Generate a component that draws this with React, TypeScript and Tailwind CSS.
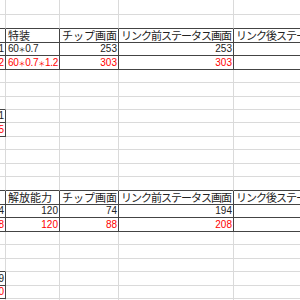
import React from 'react';

type Cell = {
  t?: string;
  right?: boolean;
  red?: boolean;
  jp?: boolean;
  tight?: boolean;
  b?: boolean; // dark bottom border
  r?: boolean; // dark right border
};

type Row = { h: number; cells: Cell[] };

const heights: Record<number, string> = {
  13: 'h-[13px]',
  14: 'h-[14px]',
  15: 'h-[15px]',
  20: 'h-[20px]',
};

const widths = ['w-[6px]', 'w-[54px]', 'w-[59px]', 'w-[115px]', 'w-[80px]'];

const empty = (): Cell[] => [{}, {}, {}, {}, {}];
const darkBottomA = (): Cell[] => [{ b: true }, {}, {}, {}, {}];
const darkBottomAll = (): Cell[] => [{ b: true }, { b: true }, { b: true }, { b: true }, { b: true }];

const box = (c: Cell): Cell => ({ ...c, b: true, r: true });

const rows: Row[] = [
  { h: 15, cells: empty() },
  { h: 14, cells: darkBottomAll() },
  {
    h: 14,
    cells: [
      box({}),
      box({ t: '特装', jp: true }),
      box({ t: 'チップ画面', jp: true }),
      box({ t: 'リンク前ステータス画面', jp: true, tight: true }),
      box({ t: 'リンク後ステータス画面', jp: true, tight: true }),
    ],
  },
  {
    h: 13,
    cells: [
      box({ t: '1', right: true }),
      box({ t: '60＊0.7' }),
      box({ t: '253', right: true }),
      box({ t: '253', right: true }),
      box({}),
    ],
  },
  {
    h: 14,
    cells: [
      box({ t: '2', right: true, red: true }),
      box({ t: '60＊0.7＊1.2', red: true }),
      box({ t: '303', right: true, red: true }),
      box({ t: '303', right: true, red: true }),
      box({}),
    ],
  },
  { h: 13, cells: empty() },
  { h: 14, cells: empty() },
  { h: 13, cells: darkBottomA() },
  { h: 13, cells: [box({ t: '1', right: true }), {}, {}, {}, {}] },
  { h: 14, cells: [box({ t: '5', right: true, red: true }), {}, {}, {}, {}] },
  { h: 13, cells: empty() },
  { h: 14, cells: empty() },
  { h: 13, cells: empty() },
  { h: 14, cells: darkBottomAll() },
  {
    h: 14,
    cells: [
      box({}),
      box({ t: '解放能力', jp: true }),
      box({ t: 'チップ画面', jp: true }),
      box({ t: 'リンク前ステータス画面', jp: true, tight: true }),
      box({ t: 'リンク後ステータス画面', jp: true, tight: true }),
    ],
  },
  {
    h: 13,
    cells: [
      box({ t: '4', right: true }),
      box({ t: '120', right: true }),
      box({ t: '74', right: true }),
      box({ t: '194', right: true }),
      box({}),
    ],
  },
  {
    h: 14,
    cells: [
      box({ t: '8', right: true, red: true }),
      box({ t: '120', right: true, red: true }),
      box({ t: '88', right: true, red: true }),
      box({ t: '208', right: true, red: true }),
      box({}),
    ],
  },
  { h: 13, cells: empty() },
  { h: 14, cells: empty() },
  { h: 13, cells: darkBottomA() },
  { h: 14, cells: [box({ t: '9', right: true }), {}, {}, {}, {}] },
  { h: 13, cells: [box({ t: '0', right: true, red: true }), {}, {}, {}, {}] },
  { h: 20, cells: empty() },
];

// full-width asterisk kept narrow, like MS PGothic
function renderText(t: string) {
  const parts = t.split('＊');
  return parts.map((p, i) => (
    <React.Fragment key={i}>
      {i > 0 && <span className="text-[7px] font-['Noto_Sans_CJK_JP',sans-serif]">＊</span>}
      {p}
    </React.Fragment>
  ));
}

function SheetCell({ cell, col }: { cell: Cell; col: number }) {
  const border = `${cell.b ? 'border-b-[#444]' : 'border-b-[#dadada]'} ${
    cell.r ? 'border-r-[#444]' : 'border-r-[#dadada]'
  }`;
  const font = cell.jp
    ? "font-['Noto_Sans_CJK_JP',sans-serif] text-[11px]"
    : "font-['Liberation_Sans','Noto_Sans_CJK_JP',sans-serif] text-[10px]";
  const spacing = cell.tight ? 'tracking-[-1px]' : cell.t && cell.t.includes('＊') ? 'tracking-[-0.3px]' : '';
  // only the scrolled-off first column clips its numbers
  const clip = col === 0 ? 'overflow-hidden' : '';
  return (
    <div
      className={`${widths[col]} shrink-0 h-full box-border border-b border-r ${border} ${clip} flex items-end whitespace-nowrap leading-none pb-px ${
        cell.right ? 'justify-end pr-px' : 'justify-start pl-[2px]'
      } ${cell.red ? 'text-[#ff0000]' : 'text-[#222]'} ${font} ${spacing}`}
    >
      {cell.t && <span>{renderText(cell.t)}</span>}
    </div>
  );
}

export default function App() {
  return (
    <div className="w-[300px] h-[300px] overflow-hidden bg-white">
      {rows.map((row, i) => (
        <div key={i} className={`flex ${heights[row.h]}`}>
          {row.cells.map((c, j) => (
            <SheetCell key={j} cell={c} col={j} />
          ))}
        </div>
      ))}
    </div>
  );
}
